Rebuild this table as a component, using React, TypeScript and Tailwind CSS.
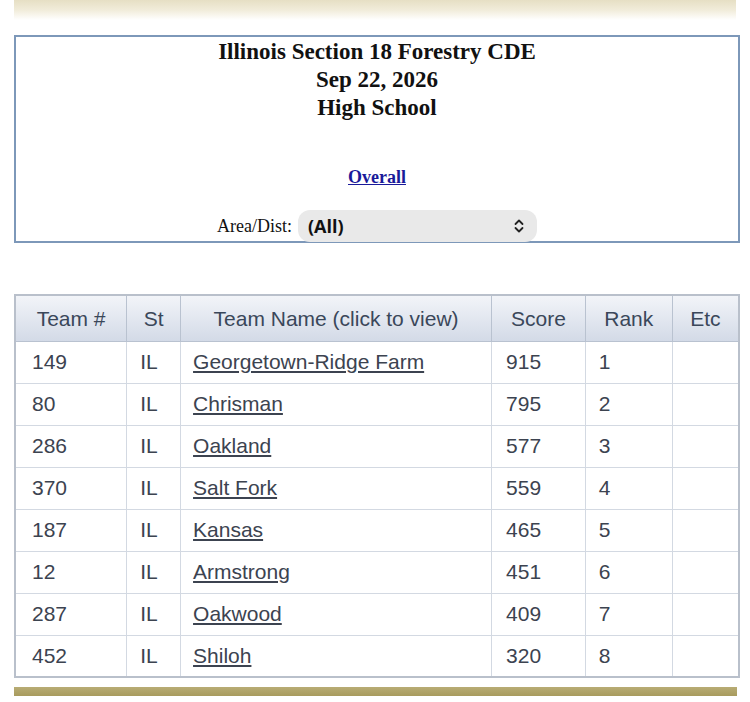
import React from "react"

const teams = [
  { num: "149", st: "IL", name: "Georgetown-Ridge Farm", score: "915", rank: "1" },
  { num: "80", st: "IL", name: "Chrisman", score: "795", rank: "2" },
  { num: "286", st: "IL", name: "Oakland", score: "577", rank: "3" },
  { num: "370", st: "IL", name: "Salt Fork", score: "559", rank: "4" },
  { num: "187", st: "IL", name: "Kansas", score: "465", rank: "5" },
  { num: "12", st: "IL", name: "Armstrong", score: "451", rank: "6" },
  { num: "287", st: "IL", name: "Oakwood", score: "409", rank: "7" },
  { num: "452", st: "IL", name: "Shiloh", score: "320", rank: "8" },
]

const headers = ["Team #", "St", "Team Name (click to view)", "Score", "Rank", "Etc"]
const widths = ["w-[112px]", "w-[54px]", "w-[312px]", "w-[94px]", "w-[87px]", "w-[67px]"]

export default function App() {
  return (
    <div className="w-[750px] h-[702px] bg-white overflow-hidden">
      {/* banner remnant */}
      <div className="mx-[14px] w-[722px] h-[20px] bg-gradient-to-b from-[#e6dfc4] via-[#f1ecda] to-white" />

      {/* title box */}
      <div className="mt-[15px] mx-[14px] w-[726px] h-[208px] border-2 border-[#7d98b9] flex flex-col items-center font-['Liberation_Serif',serif]">
        <div className="mt-[1px] text-center font-bold text-[23px] leading-[28px] text-[#111]">
          <div>Illinois Section 18 Forestry CDE</div>
          <div>Sep 22, 2026</div>
          <div>High School</div>
        </div>
        <a href="#" className="mt-[44px] font-bold text-[18px] leading-[22px] text-[#1a1a9a] underline">
          Overall
        </a>
        <div className="mt-[22px] flex items-center gap-[6px]">
          <span className="text-[18px] text-[#111]">Area/Dist:</span>
          <div className="w-[239px] h-[32px] rounded-[12px] bg-[#e9e9e9] flex items-center justify-between pl-[10px] pr-[12px]">
            <span className="font-['Open_Sans',sans-serif] font-bold text-[18px] text-[#111]">(All)</span>
            <svg width="12" height="16" viewBox="0 0 12 16" fill="none" stroke="#222" strokeWidth="1.8" strokeLinecap="round" strokeLinejoin="round">
              <path d="M2.5 6 L6 2.5 L9.5 6" />
              <path d="M2.5 10 L6 13.5 L9.5 10" />
            </svg>
          </div>
        </div>
      </div>

      {/* results table */}
      <table className="mt-[51px] ml-[14px] w-[726px] border-collapse border-2 border-[#b9c0cb] font-['Liberation_Sans',sans-serif] text-[21px]">
        <thead>
          <tr className="h-[46px] bg-gradient-to-b from-[#f3f5f9] to-[#d3dae7]">
            {headers.map((h, i) => (
              <th key={i} className={`${widths[i]} border border-[#b9c2d0] font-normal text-[#3a475a] text-center`}>
                {h}
              </th>
            ))}
          </tr>
        </thead>
        <tbody>
          {teams.map((t, i) => (
            <tr key={i} className="h-[42px] text-[#3c4350]">
              <td className="border border-[#d3d9e2] pl-[16px]">{t.num}</td>
              <td className="border border-[#d3d9e2] pl-[13px]">{t.st}</td>
              <td className="border border-[#d3d9e2] pl-[12px]">
                <a href="#" className="underline text-[#3c4350]">{t.name}</a>
              </td>
              <td className="border border-[#d3d9e2] pl-[14px]">{t.score}</td>
              <td className="border border-[#d3d9e2] pl-[13px]">{t.rank}</td>
              <td className="border border-[#d3d9e2]"></td>
            </tr>
          ))}
        </tbody>
      </table>

      {/* footer bar */}
      <div className="mt-[9px] ml-[14px] w-[723px] h-[9px] bg-gradient-to-b from-[#b8ac74] to-[#a89b5e]" />
    </div>
  )
}
